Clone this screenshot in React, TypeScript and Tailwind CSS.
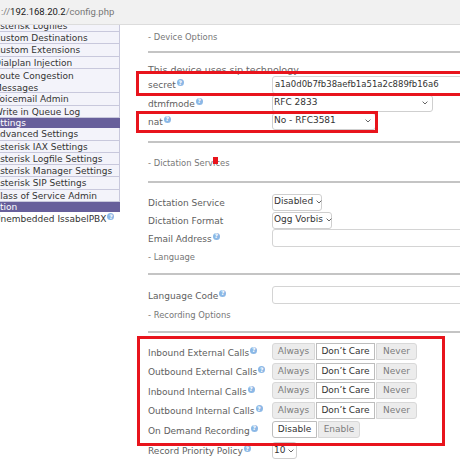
import React from 'react'

function Help() {
  return (
    <span className="relative -top-[3px] ml-[1px] inline-flex h-[7px] w-[7px] items-center justify-center rounded-full bg-[#8bb8e6] align-middle text-[6px] font-bold leading-none text-white">
      ?
    </span>
  )
}

function Chevron() {
  return (
    <svg width="6" height="4" viewBox="0 0 6 4" className="shrink-0">
      <path d="M0.6 0.6 L3 3 L5.4 0.6" fill="none" stroke="#555" strokeWidth="0.9" />
    </svg>
  )
}

interface SelectProps {
  value: string
  width: string
  tight?: boolean
}

function Select({ value, width, tight }: SelectProps) {
  return (
    <div
      className={`flex h-[17px] items-center rounded-[3px] border border-[#cfcfcf] bg-white pl-[1px] pr-[4px] text-[9px] text-[#333] ${tight ? 'gap-[3px]' : 'justify-between'} ${width}`}
    >
      <span className="whitespace-nowrap">{value}</span>
      <Chevron />
    </div>
  )
}

function Input({ value }: { value?: string }) {
  return (
    <div className="flex h-[18px] w-[200px] shrink-0 items-center rounded-[3px] border border-[#d4d4d4] bg-white pl-[2px] text-[8.5px] text-[#333]">
      {value}
    </div>
  )
}

function Row({ label, help, height, children }: { label: string; help?: boolean; height: string; children?: React.ReactNode }) {
  return (
    <div className={`flex items-center ${height}`}>
      <div className="w-[124px] shrink-0 whitespace-nowrap pt-[3px] text-[9px] text-[#606060]">
        {label}
        {help && <Help />}
      </div>
      {children}
    </div>
  )
}

function Line() {
  return <div className="h-[2px] w-full bg-[#c4c4c4]" />
}

function Section({ text, height }: { text: string; height: string }) {
  return <div className={`flex items-center pt-[3px] text-[8.4px] text-[#777] ${height}`}>{text}</div>
}

function Toggle3() {
  return (
    <div className="flex h-[17px] gap-[1px] text-[9px]">
      <div className="flex w-[43px] items-center justify-center rounded-l-[3px] border border-[#d8d8d8] bg-[#ececec] text-[#7c7c7c]">Always</div>
      <div className="flex w-[59px] items-center justify-center border border-[#bdbdbd] bg-white text-[#333]">Don’t Care</div>
      <div className="flex w-[41px] items-center justify-center rounded-r-[3px] border border-[#d8d8d8] bg-[#ececec] text-[#7c7c7c]">Never</div>
    </div>
  )
}

const menu: { text: string; kind: 'item' | 'item2' | 'head' | 'plain'; second?: string }[] = [
  { text: 'Asterisk Logfiles', kind: 'item' },
  { text: 'Custom Destinations', kind: 'item' },
  { text: 'Custom Extensions', kind: 'item' },
  { text: 'Dialplan Injection', kind: 'item' },
  { text: 'Route Congestion', second: 'Messages', kind: 'item2' },
  { text: 'Voicemail Admin', kind: 'item' },
  { text: 'Write in Queue Log', kind: 'item' },
  { text: 'Settings', kind: 'head' },
  { text: 'Advanced Settings', kind: 'item' },
  { text: 'Asterisk IAX Settings', kind: 'item' },
  { text: 'Asterisk Logfile Settings', kind: 'item' },
  { text: 'Asterisk Manager Settings', kind: 'item' },
  { text: 'Asterisk SIP Settings', kind: 'item' },
  { text: 'Class of Service Admin', kind: 'item' },
  { text: 'Action', kind: 'head' },
  { text: 'Unembedded IssabelPBX', kind: 'plain' },
]

function Sidebar() {
  return (
    <div className="w-[120px] shrink-0 overflow-hidden">
      <div className="-mt-[5.25px] text-[9px] text-[#333]">
        {menu.map((m) => {
          if (m.kind === 'head') {
            return (
              <div key={m.text} className="h-[10.5px] whitespace-nowrap bg-[#675f9b] leading-[11px] text-white">
                <span className="-ml-[11px] block">{m.text}</span>
              </div>
            )
          }
          if (m.kind === 'item2') {
            return (
              <div key={m.text} className="h-[24.5px] whitespace-nowrap border-b border-r border-[#c8c8dc] bg-[#f3f3fa] pt-[1px] leading-[12px]">
                <span className="-ml-[6px] block">{m.text}</span>
                <span className="-ml-[6px] block">{m.second}</span>
              </div>
            )
          }
          if (m.kind === 'plain') {
            return (
              <div key={m.text} className="h-[14px] whitespace-nowrap leading-[15px]">
                <span className="-ml-[6px] block">
                  {m.text}
                  <Help />
                </span>
              </div>
            )
          }
          return (
            <div key={m.text} className="h-[12.25px] whitespace-nowrap border-b border-r border-[#c8c8dc] bg-[#f3f3fa] leading-[12.5px]">
              <span className="-ml-[6px] block">{m.text}</span>
            </div>
          )
        })}
      </div>
    </div>
  )
}

export default function App() {
  return (
    <div className="relative h-[460px] w-[460px] overflow-hidden bg-white font-['DejaVu_Sans',Verdana,sans-serif]">
      {/* address bar */}
      <div className="flex h-[25px] items-center border-b border-[#dcdcdc] bg-[#f1f1f1] pl-[1px] font-['Roboto',sans-serif] text-[9.5px] text-[#777]">
        ://<span className="text-[#202020]">192.168.20.2</span>/config.php
      </div>

      <div className="flex h-[435px]">
        <Sidebar />

        <div className="flex flex-1 flex-col overflow-hidden pl-[28px]">
          <Section text="- Device Options" height="h-[22px]" />
          <div className="mt-[4px]">
            <Line />
          </div>
          <div className="flex h-[22px] items-center pt-[12px] text-[9.5px] text-[#666]">This device uses sip technology.</div>
          <Row label="secret" help height="h-[19px]">
            <Input value="a1a0d0b7fb38aefb1a51a2c889fb16a6" />
          </Row>
          <Row label="dtmfmode" help height="h-[18px]">
            <Select value="RFC 2833" width="w-[161px]" />
          </Row>
          <Row label="nat" help height="h-[18px]">
            <Select value="No - RFC3581" width="w-[104px]" />
          </Row>
          <div className="mt-[11px]">
            <Line />
          </div>
          <Section text="- Dictation Services" height="h-[38px]" />
          <Line />
          <div className="mt-[10px]">
            <Row label="Dictation Service" height="h-[18px]">
              <Select value="Disabled" width="w-[50px]" tight />
            </Row>
            <Row label="Dictation Format" height="h-[18px]">
              <Select value="Ogg Vorbis" width="w-[60px]" tight />
            </Row>
            <Row label="Email Address" help height="h-[18px]">
              <Input />
            </Row>
          </div>
          <Section text="- Language" height="h-[18px]" />
          <div className="mt-[8px]">
            <Line />
          </div>
          <div className="mt-[11px]">
            <Row label="Language Code" help height="h-[18px]">
              <Input />
            </Row>
          </div>
          <Section text="- Recording Options" height="h-[20px]" />
          <div className="mt-[7px]">
            <Line />
          </div>
          <div className="mt-[9px]">
            <Row label="Inbound External Calls" help height="h-[19.5px]">
              <Toggle3 />
            </Row>
            <Row label="Outbound External Calls" help height="h-[19.5px]">
              <Toggle3 />
            </Row>
            <Row label="Inbound Internal Calls" help height="h-[19.5px]">
              <Toggle3 />
            </Row>
            <Row label="Outbound Internal Calls" help height="h-[19.5px]">
              <Toggle3 />
            </Row>
            <Row label="On Demand Recording" help height="h-[19.5px]">
              <div className="flex h-[17px] gap-[1px] text-[9px]">
                <div className="flex w-[45px] items-center justify-center rounded-l-[3px] border border-[#bdbdbd] bg-white text-[#333]">Disable</div>
                <div className="flex w-[42px] items-center justify-center rounded-r-[3px] border border-[#d8d8d8] bg-[#ececec] text-[#7c7c7c]">Enable</div>
              </div>
            </Row>
          </div>
          <div className="mt-[1.5px]">
            <Row label="Record Priority Policy" help height="h-[19px]">
              <Select value="10" width="w-[25px]" tight />
            </Row>
          </div>
        </div>
      </div>

      {/* annotation boxes */}
      <div className="absolute left-[136px] top-[71px] h-[25px] w-[330px] border-[3px] border-[#e8141c]" />
      <div className="absolute left-[136px] top-[111px] h-[22px] w-[242px] border-[3px] border-[#e8141c]" />
      <div className="absolute left-[137px] top-[336px] h-[110px] w-[308px] border-[3px] border-[#e8141c]" />
      <div className="absolute left-[213px] top-[157px] h-[7px] w-[5px] bg-[#e8141c]" />
    </div>
  )
}
